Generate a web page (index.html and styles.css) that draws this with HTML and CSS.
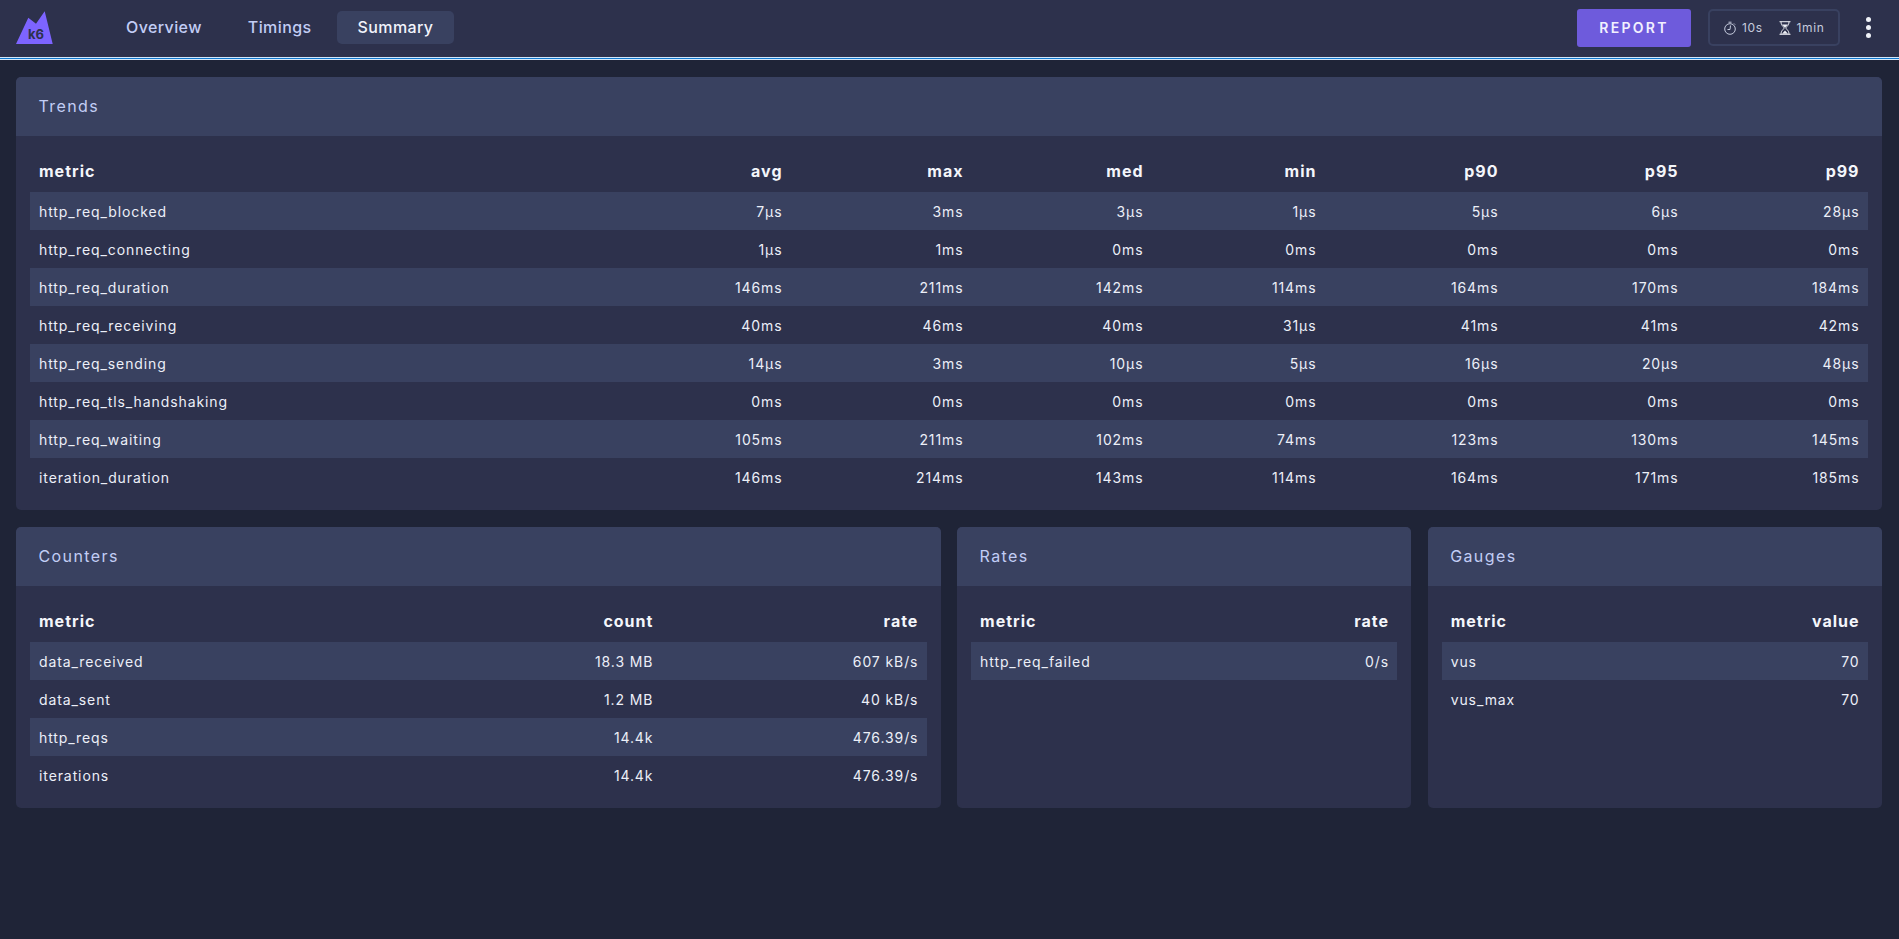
FILE: index.html
```html
<!doctype html>
<html>
<head>
<meta charset="utf-8">
<title>k6 dashboard</title>
<link rel="stylesheet" href="styles.css">
</head>

<body>
<header class="top">
	<svg class="logo" width="38" height="33" viewBox="0 0 38 33">
		<path d="M0 33 12.300 6.700 20 12.800 28.700 0.300 36.700 33Z" fill="#7d64ff"/>
		<text x="20" y="27.500" class="logo-txt" text-anchor="middle">k6</text>
	</svg>
	<nav class="tabs">
		<a href="#" class="tab">Overview</a>
		<a href="#" class="tab">Timings</a>
		<a href="#" class="tab on">Summary</a>
	</nav>
	<a href="#" class="report">REPORT</a>
	<div class="times">
		<svg width="12" height="14" viewBox="0 0 12 14" fill="none" stroke="#c5cbdd" stroke-width="1">
			<circle cx="6" cy="8" r="5.300"/>
			<path d="M4.500 1.200h3M6.500 4.500 6 8.500H3.500M10 2.500l1 1"/>
		</svg>
		<span class="time">10s</span>
		<svg class="hour" width="12" height="14" viewBox="0 0 12 14" fill="none" stroke="#eef0f6" stroke-width="1">
			<path d="M.5 .7h11M.5 13.300h11M2 .7c0 4.300 3 4.800 3 6.300s-3 2-3 6.300M10 .7c0 4.300-3 4.800-3 6.300s3 2 3 6.300"/>
			<path d="M3 3.500h6L6 6.800ZM3 12.800 6 9.500 9 12.800Z" fill="#eef0f6" stroke="none"/>
		</svg>
		<span class="time">1min</span>
	</div>
	<div class="more"><i></i><i></i><i></i></div>
</header>

<main class="wrap">
	<section class="card span12">
		<h2>Trends</h2>
		<div class="body">
			<table class="trends">
				<colgroup><col class="c-m"><col class="c-a"><col class="c-b"><col class="c-c"><col class="c-d"><col class="c-e"><col class="c-f"><col class="c-g"></colgroup>
				<thead><tr><th>metric</th><th>avg</th><th>max</th><th>med</th><th>min</th><th>p90</th><th>p95</th><th>p99</th></tr></thead>
				<tbody>
					<tr><td>http_req_blocked</td><td>7µs</td><td>3ms</td><td>3µs</td><td>1µs</td><td>5µs</td><td>6µs</td><td>28µs</td></tr>
					<tr><td>http_req_connecting</td><td>1µs</td><td>1ms</td><td>0ms</td><td>0ms</td><td>0ms</td><td>0ms</td><td>0ms</td></tr>
					<tr><td>http_req_duration</td><td>146ms</td><td>211ms</td><td>142ms</td><td>114ms</td><td>164ms</td><td>170ms</td><td>184ms</td></tr>
					<tr><td>http_req_receiving</td><td>40ms</td><td>46ms</td><td>40ms</td><td>31µs</td><td>41ms</td><td>41ms</td><td>42ms</td></tr>
					<tr><td>http_req_sending</td><td>14µs</td><td>3ms</td><td>10µs</td><td>5µs</td><td>16µs</td><td>20µs</td><td>48µs</td></tr>
					<tr><td>http_req_tls_handshaking</td><td>0ms</td><td>0ms</td><td>0ms</td><td>0ms</td><td>0ms</td><td>0ms</td><td>0ms</td></tr>
					<tr><td>http_req_waiting</td><td>105ms</td><td>211ms</td><td>102ms</td><td>74ms</td><td>123ms</td><td>130ms</td><td>145ms</td></tr>
					<tr><td>iteration_duration</td><td>146ms</td><td>214ms</td><td>143ms</td><td>114ms</td><td>164ms</td><td>171ms</td><td>185ms</td></tr>
				</tbody>
			</table>
		</div>
	</section>

	<section class="card span6">
		<h2>Counters</h2>
		<div class="body">
			<table class="counters">
				<colgroup><col><col class="c-count"><col class="c-rate"></colgroup>
				<thead><tr><th>metric</th><th>count</th><th>rate</th></tr></thead>
				<tbody>
					<tr><td>data_received</td><td>18.3 MB</td><td>607 kB/s</td></tr>
					<tr><td>data_sent</td><td>1.2 MB</td><td>40 kB/s</td></tr>
					<tr><td>http_reqs</td><td>14.4k</td><td>476.39/s</td></tr>
					<tr><td>iterations</td><td>14.4k</td><td>476.39/s</td></tr>
				</tbody>
			</table>
		</div>
	</section>

	<section class="card span3">
		<h2>Rates</h2>
		<div class="body">
			<table>
				<thead><tr><th>metric</th><th>rate</th></tr></thead>
				<tbody>
					<tr><td>http_req_failed</td><td>0/s</td></tr>
				</tbody>
			</table>
		</div>
	</section>

	<section class="card span3">
		<h2>Gauges</h2>
		<div class="body">
			<table>
				<thead><tr><th>metric</th><th>value</th></tr></thead>
				<tbody>
					<tr><td>vus</td><td>70</td></tr>
					<tr><td>vus_max</td><td>70</td></tr>
				</tbody>
			</table>
		</div>
	</section>
</main>
</body>
</html>
```

FILE: styles.css
```css
*{margin:0; padding:0; box-sizing:border-box;}
html,body{height:100%;}
body{background:#1f2437; font-family:Inter,"Noto Sans",sans-serif; color:#f0f2f8; overflow:hidden;}

.top{height:60px; display:flex; align-items:center; background:#2d314c; padding:0 28px 4px 16px; border-bottom:1px solid #d3e7fa; box-shadow:inset 0 -1px 0 #0f76cc, inset 0 -2px 0 #d3e7fa;}
.logo{flex:none;}
.logo-txt{font:700 13px Inter,sans-serif; fill:#2d314c;}
.tabs{display:flex; gap:5px; margin-left:51.500px; flex:1;}
.tab{height:33px; line-height:33px; padding:0 20.500px; border-radius:5px; font-size:16px; letter-spacing:.4px; font-weight:500; color:#c2cdf5; text-decoration:none;}
.tab.on{background:#394160; color:#f2f4fc;}
.report{width:114px; height:38px; line-height:38px; text-align:center; background:#6e5bdc; border-radius:3px; color:#f2f0ff; font-size:14px; font-weight:600; letter-spacing:2.300px; text-decoration:none;}
.times{width:132px; height:37px; margin-left:17px; display:flex; align-items:center; padding-left:14px; border:2px solid #394160; border-radius:5px;}
.time{font-size:12px; letter-spacing:.6px; color:#c5cbdd; margin-left:6px;}
.hour{margin-left:16px;}
.more{width:5px; margin-left:26px; display:flex; flex-direction:column; gap:3px;}
.more i{display:block; width:5px; height:5px; background:#f0f2f8; border-radius:50%;}

.wrap{display:grid; grid-template-columns:repeat(12,1fr); gap:17px 16.200px; padding:17px 17px 0 16px; align-items:stretch;}
.card{background:#2d314c; border-radius:5px; overflow:hidden;}
.span12{grid-column:span 12;}
.span6{grid-column:span 6;}
.span3{grid-column:span 3;}
.card h2{height:59px; line-height:59px; padding-left:22.500px; background:#394160; font-size:16px; font-weight:400; letter-spacing:1.400px; color:#c2cdf5;}
.body{padding:14px 14px 14px;}

table{width:100%; border-collapse:collapse; table-layout:fixed;}
th,td{text-align:right; padding:0 8.500px 0 9px;}
th:first-child,td:first-child{text-align:left;}
th{height:42px; font-size:16px; font-weight:700; letter-spacing:1px; color:#f4f6fb;}
td{height:38px; font-size:14px; letter-spacing:.9px; color:#eceff8;}
tbody tr:nth-child(odd){background:#394160;}

.c-a{width:auto;}
.c-b{width:181px;}
.c-c{width:180px;}
.c-d{width:173px;}
.c-e{width:182px;}
.c-f{width:180px;}
.c-g{width:181px;}
.c-m{width:579px;}
.c-count{width:200px;}
.c-rate{width:265px;}
```
